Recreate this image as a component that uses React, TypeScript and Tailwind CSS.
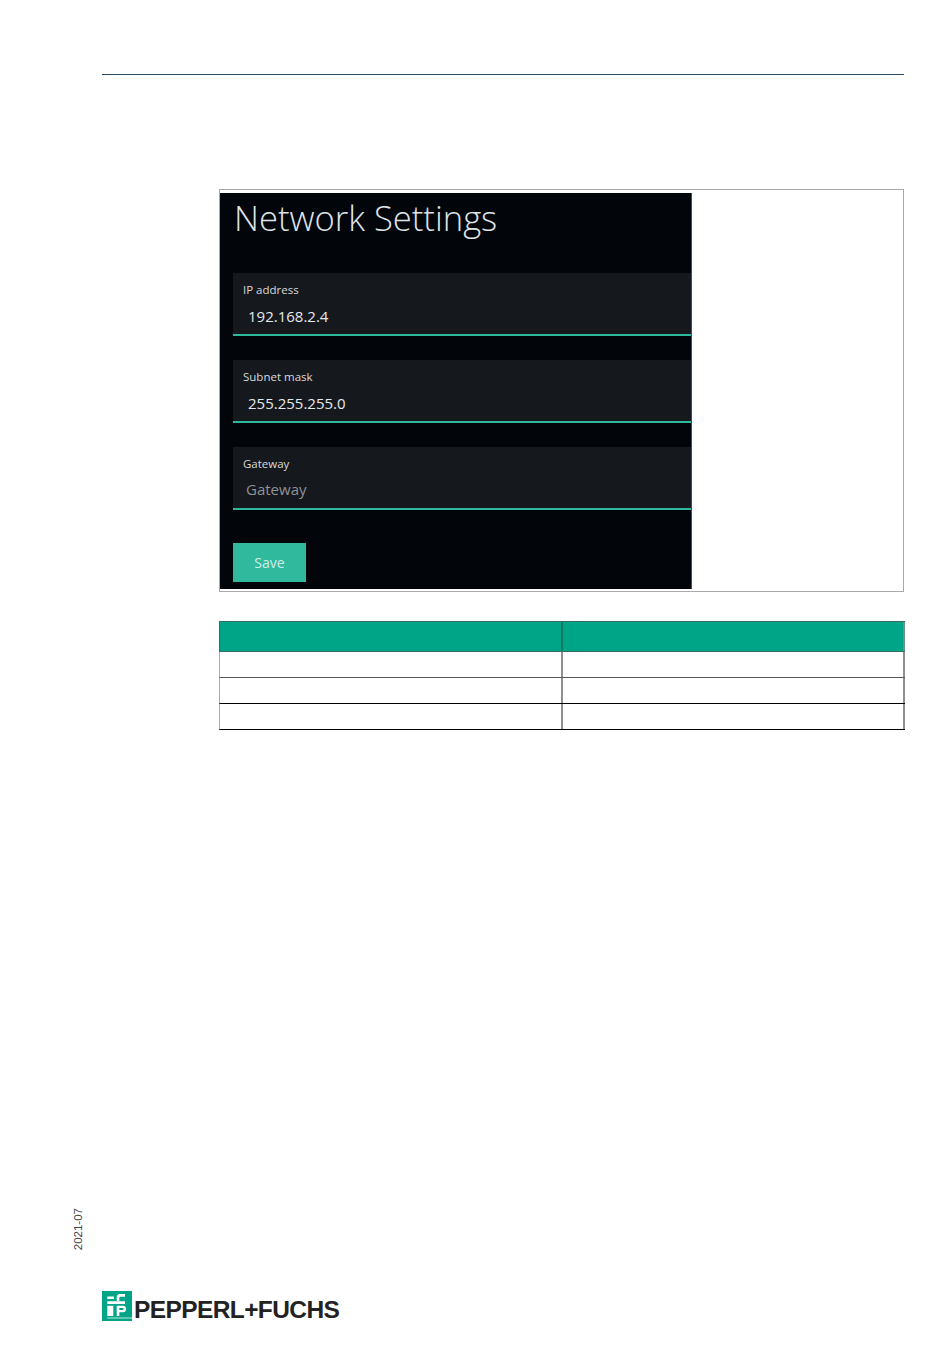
import React from 'react';

const fields = [
  { label: 'IP address', value: '192.168.2.4', placeholder: false, gap: 'mt-[32px]' },
  { label: 'Subnet mask', value: '255.255.255.0', placeholder: false, gap: 'mt-[24px]' },
  { label: 'Gateway', value: 'Gateway', placeholder: true, gap: 'mt-[24px]' },
];

const rowBorders = ['border-[#555]', 'border-black', 'border-black'];

function Field({ label, value, placeholder, gap }: { label: string; value: string; placeholder: boolean; gap: string }) {
  return (
    <div className={`${gap} ml-[13px] h-[63px] bg-[#15181d] border-b-2 border-[#2fb89d] pl-[10px]`}>
      <div className="pt-[9px] text-[11.5px] leading-[16px] text-[#d8dadc] font-['Open_Sans',sans-serif]">{label}</div>
      <div
        className={`text-[15px] leading-[22px] font-['Open_Sans',sans-serif] ${
          placeholder ? 'mt-[6px] pl-[3px] text-[#8f9295]' : 'mt-[7px] pl-[5px] text-[#e6e8ea]'
        }`}
      >
        {value}
      </div>
    </div>
  );
}

function LogoMark() {
  return (
    <svg width="30" height="30" viewBox="0 0 30 30" className="shrink-0">
      <rect width="30" height="30" fill="#00a587" />
      {/* left tab, cross bar and left block */}
      <path fill="#fff" d="M5.300 5.500H12V8H5.300zM5.300 10.300H23V13H5.300zM5.300 14.700h6v10.300h-6z" />
      {/* f */}
      <path fill="#fff" d="M14.700 10.300V6c0-2 1.300-3 3.300-3h5v2.800h-4.300c-1 0-1.400.4-1.400 1.200v3.300z" />
      {/* p */}
      <path
        fill="#fff"
        fillRule="evenodd"
        d="M14.700 14.700H21c2.200 0 3.200 1.400 3.200 3.200S23.200 21.200 21 21.200h-3.700V25h-2.600zM17.300 17v2h3.200c.8 0 1.100-.4 1.100-1s-.3-1-1.100-1z"
      />
      <rect x="5.300" y="26.500" width="24.700" height="1" fill="#bfe9df" />
    </svg>
  );
}

export default function App() {
  return (
    <div className="w-[950px] h-[1360px] bg-white flex flex-col font-['Liberation_Sans',sans-serif]">
      <div className="mt-[74px] ml-[102px] mr-[46px] h-px bg-[#2d4a63]" />

      <div className="mt-[114px] ml-[219px] mr-[46px]">
        <div className="h-[403px] border border-[#a9a9a9] pt-[3px]">
          <div className="w-[472px] h-[396px] bg-[#02050a] border-r border-[#4a4c4f]">
            <h1 className="pl-[14px] pt-[2px] text-[34.6px] leading-[46px] font-light text-[#dfe3e6] font-['Open_Sans',sans-serif]">
              Network Settings
            </h1>
            {fields.map((f) => (
              <Field key={f.label} {...f} />
            ))}
            <button className="mt-[33px] ml-[13px] block w-[73px] h-[39px] pb-px bg-[#31b99e] text-[14px] text-[#cfeee6] font-['Open_Sans',sans-serif]">
              Save
            </button>
          </div>
        </div>

        <div className="mt-[29px] -mr-px border-t border-[#3a6a60]">
          <div className="grid grid-cols-[343px_1fr] h-[30px] bg-[#00a587] border-l border-b border-[#3a6a60]">
            <div className="border-r-2 border-[#0a7a63]" />
            <div className="border-r-2 border-[#6f8f88]" />
          </div>
          {rowBorders.map((color, i) => (
            <div key={i} className={`grid grid-cols-[343px_1fr] h-[26px] border-b border-l border-l-[#a9a9a9] ${color}`}>
              <div className="border-r-2 border-[#8f8f8f]" />
              <div className="border-r-2 border-[#8f8f8f]" />
            </div>
          ))}
        </div>
      </div>

      <div className="mt-auto mb-[39px] ml-[72px] flex items-end">
        <div className="flex flex-col">
          <div className="[writing-mode:vertical-rl] rotate-180 text-[11.5px] leading-[12px] text-[#444] mb-[41px] self-start">
            2021-07
          </div>
          <div className="flex items-end ml-[30px]">
            <LogoMark />
            <span className="ml-[2px] text-[24.500px] leading-[22px] font-bold tracking-[-0.6px] text-[#222]">
              PEPPERL+FUCHS
            </span>
          </div>
        </div>
      </div>
    </div>
  );
}
